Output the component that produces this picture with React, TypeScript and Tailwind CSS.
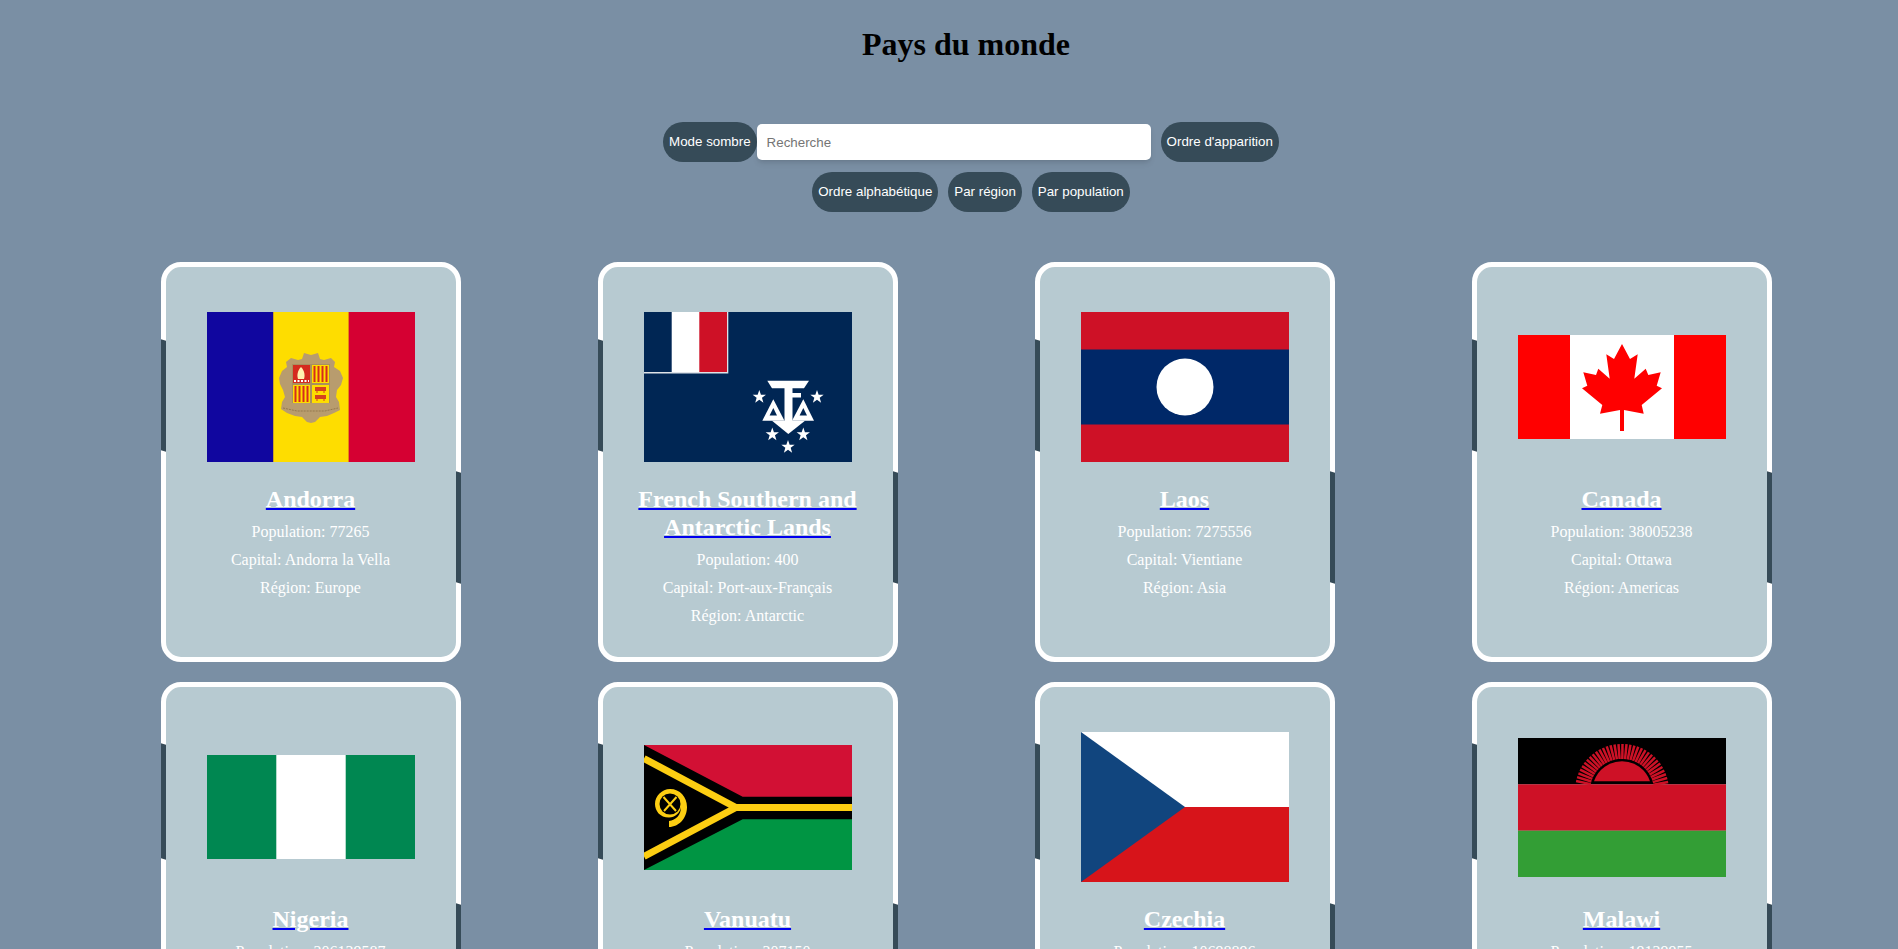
import type { ReactNode } from 'react'

const GOLD = '#fdce12'

function Star({ cx, cy, r = 7 }: { cx: number; cy: number; r?: number }) {
  const pts = Array.from({ length: 10 }, (_, i) => {
    const rad = i % 2 === 0 ? r : r * 0.4
    const a = (Math.PI / 5) * i - Math.PI / 2
    return `${cx + rad * Math.cos(a)},${cy + rad * Math.sin(a)}`
  }).join(' ')
  return <polygon points={pts} fill="#fff" />
}

function Flag({ h, children }: { h: number; children: ReactNode }) {
  return (
    <svg width={208} height={h} viewBox={`0 0 208 ${h}`} className="block">
      {children}
    </svg>
  )
}

function Andorra() {
  return (
    <Flag h={150}>
      <rect width="66.5" height="150" fill="#10069f" />
      <rect x="66.5" width="75" height="150" fill="#fedd00" />
      <rect x="141.5" width="66.5" height="150" fill="#d50032" />
      <rect x="66" width="1" height="150" fill="#c9a227" />
      <rect x="141" width="1" height="150" fill="#e88a10" />
      {/* ornement du blason */}
      <path
        d="M97 41 L104 43 L111 41 L113 47 L117 48 L124 46 L128 50 L127 55 L133 59 L136 66 L134 73 L130 78 L129 85 L132 90 L133 98 L127 101 L120 104 L113 105 L108 110 L104 111 L100 110 L95 105 L88 104 L80 101 L74 97 L75 90 L78 85 L76 78 L73 72 L72 66 L75 59 L80 55 L79 50 L84 46 L91 48 L95 47 Z"
        fill="#b89c6e"
      />
      <path d="M76 96 L90 99 H118 L131 96" stroke="#94794f" strokeWidth="1" fill="none" strokeDasharray="2 1" />
      <rect x="85" y="52" width="38" height="39" fill="#a98f5f" />
      <rect x="86" y="53" width="17" height="18" fill="#d52b1e" />
      <path d="M94 55 C90 59 90 64 91 67 H97 C98 64 98 59 94 55 Z" fill="#fff3b0" />
      <path d="M87 69 H102" stroke="#fff" strokeWidth="2" strokeDasharray="2 1.5" />
      <rect x="105" y="53" width="17" height="18" fill="#fedd00" />
      <path d="M107.5 54 V70 M111.5 54 V70 M115.5 54 V70 M119.5 54 V70" stroke="#d52b1e" strokeWidth="2" />
      <rect x="86" y="73" width="17" height="18" fill="#fedd00" />
      <path d="M88.5 74 V90 M92.5 74 V90 M96.5 74 V90 M100.5 74 V90" stroke="#d52b1e" strokeWidth="2" />
      <rect x="105" y="73" width="17" height="18" fill="#fedd00" />
      <path d="M108 75 H119 V79 H108 Z M108 83 H119 V87 H108 Z" fill="#d5421e" />
      <path d="M110 79 V81 M117 79 V81 M110 87 V89 M117 87 V89" stroke="#d5421e" strokeWidth="1" />
    </Flag>
  )
}

function Taaf() {
  return (
    <Flag h={150}>
      <rect width="208" height="150" fill="#002654" />
      <rect width="84.3" height="61.5" fill="#dfe3e8" />
      <rect width="83" height="60" fill="#fff" />
      <rect width="27.7" height="60" fill="#002654" />
      <rect x="55.3" width="27.7" height="60" fill="#ce1126" />
      <polygon points="123.3,68.7 165,68.7 160,76.3 128,76.3" fill="#fff" />
      <rect x="140.5" y="76" width="8" height="34" fill="#fff" />
      <rect x="148" y="81" width="9" height="4.5" fill="#fff" />
      <polygon points="129.3,87.3 140.5,108.7 118.3,108.7" fill="#fff" />
      <polygon points="129.3,96 133,103.5 125.6,103.5" fill="#002654" />
      <polygon points="159.3,87.3 170,108.7 148,108.7" fill="#fff" />
      <polygon points="159.3,96 163,103.5 155.6,103.5" fill="#002654" />
      <polygon points="128,108.7 161,108.7 144.3,122" fill="#fff" />
      <Star cx={115.3} cy={85} />
      <Star cx={173} cy={85} />
      <Star cx={128.3} cy={122.5} />
      <Star cx={159.3} cy={122.5} />
      <Star cx={144} cy={135} />
    </Flag>
  )
}

function Laos() {
  return (
    <Flag h={150}>
      <rect width="208" height="150" fill="#ce1126" />
      <rect y="37.5" width="208" height="75" fill="#002868" />
      <circle cx="104" cy="75" r="28.5" fill="#fff" />
    </Flag>
  )
}

function Canada() {
  return (
    <Flag h={104}>
      <rect width="208" height="104" fill="#fff" />
      <rect width="52" height="104" fill="#f00" />
      <rect x="156" width="52" height="104" fill="#f00" />
      <polygon
        fill="#f00"
        points="104,9 112,24 119.7,19.3 116.3,43.7 127.7,33.7 130.3,40 142.7,37.3 138.7,50.7 144,53.3 123.7,70 125.7,78.7 106,75 106,96 102,96 102,75 82,78.7 84.3,70 64,53.3 69.3,50.7 65.3,37.3 78,40 80.3,33.7 91.7,43.7 88.3,19.3 96,24"
      />
    </Flag>
  )
}

function Nigeria() {
  return (
    <Flag h={104}>
      <rect width="208" height="104" fill="#008751" />
      <rect x="69.3" width="69.4" height="104" fill="#fff" />
    </Flag>
  )
}

function Vanuatu() {
  return (
    <Flag h={125}>
      <rect width="208" height="62.5" fill="#d21034" />
      <rect y="62.5" width="208" height="62.5" fill="#009543" />
      <polygon points="0,0 98.7,51.7 208,51.7 208,74.3 98.7,74.3 0,125" fill="#000" />
      <path d="M0 13.5 L92 62.5 H208 M92 62.5 L0 111.5" stroke={GOLD} strokeWidth="7" fill="none" />
      <path
        d="M25 82 L25 76 C32 75 37 70 37 62 C36 68 31 72.5 25 72.5 C16 72.5 11 66 11 59 C11 51 18 44 26 44 C36 44 43 52 43 62 C43 73 35 82 25 82 Z"
        fill={GOLD}
      />
      <circle cx="26" cy="59" r="10.5" fill="#000" />
      <path d="M19.5 52 L32 66 M32.5 52 L20 66" stroke={GOLD} strokeWidth="2" />
    </Flag>
  )
}

function Czechia() {
  return (
    <Flag h={150}>
      <rect width="208" height="75" fill="#fff" />
      <rect y="75" width="208" height="75" fill="#d7141a" />
      <polygon points="0,0 104,75 0,150" fill="#11457e" />
    </Flag>
  )
}

function Malawi() {
  const rays = Array.from({ length: 33 }, (_, i) => 11 + i * 4.9)
  return (
    <Flag h={139}>
      <rect width="208" height="46.3" fill="#000" />
      <rect y="46.3" width="208" height="46.4" fill="#ce1126" />
      <rect y="92.7" width="208" height="46.3" fill="#339e35" />
      <path d="M76 43.3 A29.6 29.6 0 0 1 132 43.3 Z" fill="#ce1126" />
      {rays.map((deg) => {
        const a = (deg * Math.PI) / 180
        return (
          <line
            key={deg}
            x1={104 + 32 * Math.cos(a)}
            y1={52.9 - 32 * Math.sin(a)}
            x2={104 + 47 * Math.cos(a)}
            y2={52.9 - 47 * Math.sin(a)}
            stroke="#ce1126"
            strokeWidth="2.5"
          />
        )
      })}
    </Flag>
  )
}

const countries = [
  { name: 'Andorra', population: 77265, capital: 'Andorra la Vella', region: 'Europe', flag: <Andorra />, row: 1 },
  { name: 'French Southern and Antarctic Lands', population: 400, capital: 'Port-aux-Français', region: 'Antarctic', flag: <Taaf />, row: 1 },
  { name: 'Laos', population: 7275556, capital: 'Vientiane', region: 'Asia', flag: <Laos />, row: 1 },
  { name: 'Canada', population: 38005238, capital: 'Ottawa', region: 'Americas', flag: <Canada />, row: 1 },
  { name: 'Nigeria', population: 206139587, capital: 'Abuja', region: 'Africa', flag: <Nigeria />, row: 2 },
  { name: 'Vanuatu', population: 307150, capital: 'Port Vila', region: 'Oceania', flag: <Vanuatu />, row: 2 },
  { name: 'Czechia', population: 10698896, capital: 'Prague', region: 'Europe', flag: <Czechia />, row: 2 },
  { name: 'Malawi', population: 19129955, capital: 'Lilongwe', region: 'Africa', flag: <Malawi />, row: 2 },
]

function PillButton({ label }: { label: string }) {
  return (
    <button
      type="button"
      className="ml-[10px] h-[40px] rounded-[20px] bg-[#364b58] px-[6px] text-[13.333px] text-white"
    >
      {label}
    </button>
  )
}

function Card({ country }: { country: (typeof countries)[number] }) {
  const first = country.row === 1
  return (
    <div className="relative h-[400px] w-[300px] rounded-[20px] border-[5px] border-white bg-[#b7cad1] px-[20px] pt-[45px] text-center text-white">
      <span
        className={`absolute -left-[5px] w-[5px] skew-y-[18deg] bg-[#364b58] ${
          first ? 'top-[73px] h-[111px]' : 'top-[57px] h-[115px]'
        }`}
      />
      <span
        className={`absolute -right-[5px] w-[5px] skew-y-[18deg] bg-[#364b58] ${
          first ? 'top-[205px] h-[111px]' : 'top-[217px] h-[115px]'
        }`}
      />
      <div className="flex h-[150px] items-center justify-center">{country.flag}</div>
      <h2 className="mt-[23px] mb-[10px] text-[24px] leading-[28px] font-bold">
        <a href="#" className="underline decoration-[#0000ee] decoration-2">
          {country.name}
        </a>
      </h2>
      <p className="mb-[10px] text-[16px] leading-[18px]">Population: {country.population}</p>
      <p className="mb-[10px] text-[16px] leading-[18px]">Capital: {country.capital}</p>
      <p className="mb-[10px] text-[16px] leading-[18px]">Région: {country.region}</p>
    </div>
  )
}

export default function App() {
  return (
    <div className="h-screen overflow-hidden bg-[#7a8fa4] pl-[34px] font-['Liberation_Serif',serif]">
      <h1 className="pt-[26px] text-center text-[32px] leading-[37px] font-bold text-black">Pays du monde</h1>

      <div className="mt-[59px] flex items-center justify-center font-['Liberation_Sans',sans-serif]">
        <PillButton label="Mode sombre" />
        <input
          placeholder="Recherche"
          className="h-[36px] w-[394px] rounded-[5px] bg-white px-[10px] text-[13.333px] shadow-md placeholder:text-[#757575]"
        />
        <PillButton label="Ordre d'apparition" />
      </div>
      <div className="mt-[10px] flex items-center justify-center font-['Liberation_Sans',sans-serif]">
        <PillButton label="Ordre alphabétique" />
        <PillButton label="Par région" />
        <PillButton label="Par population" />
      </div>

      <div className="mt-[50px] grid grid-cols-[repeat(4,300px)] justify-center gap-x-[137px] gap-y-[20px]">
        {countries.map((c) => (
          <Card key={c.name} country={c} />
        ))}
      </div>
    </div>
  )
}
